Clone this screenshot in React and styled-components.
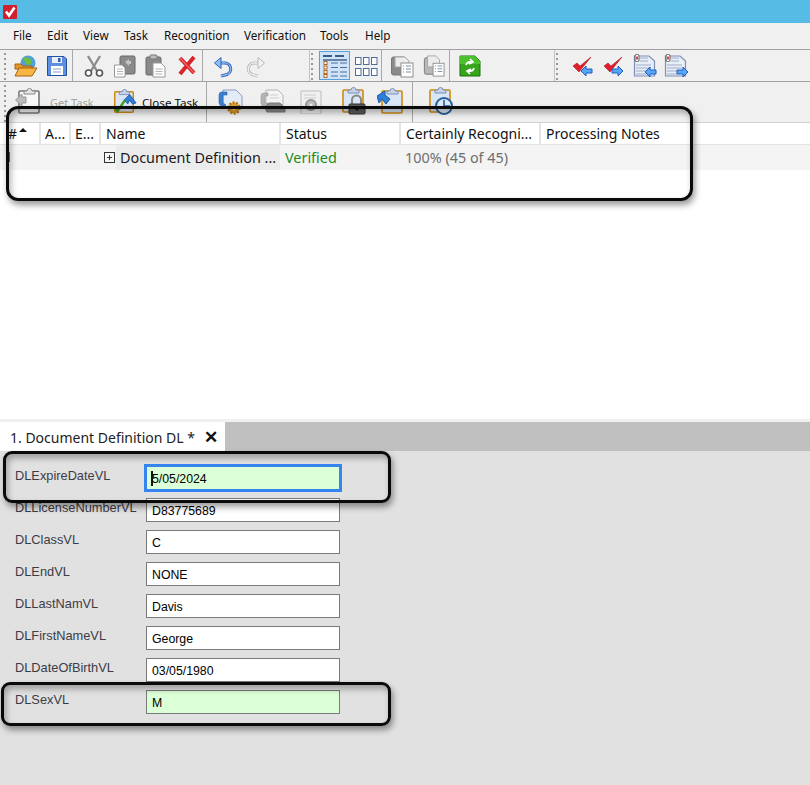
import React from "react";
import styled, { createGlobalStyle } from "styled-components";

const GlobalStyle = createGlobalStyle`
  html, body { margin: 0; padding: 0; background: #fff; }
  body { font-family: "Noto Sans", "Open Sans", sans-serif; }
`;

const Page = styled.div`
  position: relative;
  width: 810px;
  height: 785px;
  overflow: hidden;
  display: flex;
  flex-direction: column;
`;

const TitleBar = styled.div`
  height: 23px;
  background: #56bce6;
  display: flex;
  align-items: center;
  padding-left: 3px;
`;

const MenuBar = styled.div`
  height: 26px;
  box-sizing: border-box;
  padding: 0 0 2px 13px;
  background: #f0f0f0;
  display: flex;
  align-items: center;
  font-size: 11.7px;
  color: #111;
`;

const MenuItem = styled.span`
  width: ${(p) => p.$w}px;
`;

const Toolbar = styled.div`
  height: ${(p) => p.$h}px;
  box-sizing: content-box;
  background: #f0f0f0;
  border-top: 1px solid #a0a0a0;
  display: flex;
  align-items: center;
`;

const Grip = styled.div`
  width: 4px;
  height: 100%;
  margin-left: ${(p) => p.$ml || 3}px;
  margin-right: ${(p) => p.$mr || 3}px;
  border-left: ${(p) => (p.$line ? "1px solid #c4c4c4" : "none")};
  background: repeating-linear-gradient(to bottom, #9a9a9a 0 2px, transparent 2px 5px) no-repeat 1px 3px / 2px 100%;
`;

const Sep = styled.div`
  width: 1px;
  flex: none;
  align-self: stretch;
  background: #a8a8a8;
  margin-left: ${(p) => p.$ml || 0}px;
  margin-right: ${(p) => p.$mr || 0}px;
`;

const ToolButton = styled.div`
  width: ${(p) => p.$w || 31}px;
  flex: none;
  height: 29px;
  box-sizing: border-box;
  display: flex;
  align-items: center;
  justify-content: center;
  border: 1px solid ${(p) => (p.$active ? "#5a9fd8" : "transparent")};
  background: ${(p) => (p.$active ? "#cfe4f9" : "transparent")};
`;

const TextTool = styled.div`
  display: flex;
  align-items: center;
  flex: none;
  width: ${(p) => p.$w}px;
  font-size: ${(p) => (p.$muted ? 11 : 11.6)}px;
  color: ${(p) => (p.$muted ? "#a2a2a2" : "#111")};
  gap: ${(p) => p.$gap}px;
`;

const Table = styled.div`
  display: flex;
  flex-direction: column;
  flex: 1;
  background: #fff;
`;

const HeaderRow = styled.div`
  display: grid;
  grid-template-columns: 41px 30px 30px 180px 120px 140px 1fr;
  height: 23px;
  box-sizing: border-box;
  border-top: 1px solid #d2d2d2;
  border-bottom: 1px solid #e4e4e4;
  font-size: 14px;
  color: #111;
`;

const HeadCell = styled.div`
  display: flex;
  align-items: center;
  padding-left: ${(p) => p.$pad ?? 5}px;
  border-right: 2px solid #e4e4e4;
  white-space: nowrap;
  overflow: hidden;
  &:last-child { border-right: none; }
`;

const SortMark = styled.span`
  width: 0;
  height: 0;
  margin: 0 0 8px 2px;
  border-left: 4px solid transparent;
  border-right: 4px solid transparent;
  border-bottom: 4px solid #111;
`;

const DataRow = styled.div`
  display: grid;
  grid-template-columns: 100px 180px 120px 1fr;
  height: 25px;
  background: #f4f4f4;
  font-size: 14.4px;
`;

const RowLead = styled.div`
  position: relative;
`;

const RowMarker = styled.span`
  position: absolute;
  left: 8px;
  top: 7px;
  width: 2px;
  height: 10px;
  background: #2f6fc0;
`;

const NameCell = styled.div`
  display: flex;
  align-items: center;
  background: linear-gradient(to right, #f4f4f4 16px, #ececec 16px);
  white-space: nowrap;
  color: #1a1a1a;
  padding-left: 4px;
  gap: 5px;
`;

const Expander = styled.span`
  position: relative;
  width: 9px;
  height: 9px;
  border: 1px solid #333;
  flex: none;
  background:
    linear-gradient(#333, #333) center / 5px 1px no-repeat,
    linear-gradient(#333, #333) center / 1px 5px no-repeat;
`;

const StatusCell = styled.div`
  display: flex;
  align-items: center;
  padding-left: 5px;
  color: ${(p) => p.$color};
`;

const TabStrip = styled.div`
  height: 29px;
  border-top: 3px solid #f0f0f0;
  background: #c0c0c0;
  display: flex;
`;

const Tab = styled.div`
  width: 225px;
  box-sizing: border-box;
  padding: 1px 0 0 10px;
  background: #fff;
  display: flex;
  align-items: center;
  gap: 9px;
  font-size: 14px;
  color: #222;
`;

const TabClose = styled.span`
  font-family: "Liberation Sans", sans-serif;
  font-weight: bold;
  font-size: 17px;
  color: #111;
`;

const Form = styled.div`
  height: 334px;
  background: #e1e1e1;
  padding: 11px 0 0 15px;
  box-sizing: border-box;
  font-family: "Liberation Sans", Arial, sans-serif;
`;

const FormRow = styled.div`
  display: flex;
  align-items: center;
  height: 32px;
`;

const FieldLabel = styled.div`
  width: 131px;
  font-size: 12.8px;
  color: #3c3c46;
  margin-top: -6px;
`;

const Field = styled.div`
  position: relative;
  width: 194px;
  height: 24px;
  box-sizing: border-box;
  padding: 1px 0 0 5px;
  display: flex;
  align-items: center;
  font-size: 12.3px;
  color: #000;
  background: ${(p) => (p.$ok ? "#dbffd6" : "#fff")};
  border: 1px solid #7a7a7a;
  ${(p) => p.$focus && `
    outline: 2px solid #3585f0;
    outline-offset: 0;
    border-color: #3585f0;
  `}
`;

const Caret = styled.span`
  position: absolute;
  left: 4px;
  top: 4px;
  width: 2px;
  height: 15px;
  background: #111;
`;

const Callout = styled.div`
  position: absolute;
  box-sizing: border-box;
  left: ${(p) => p.$x}px;
  top: ${(p) => p.$y}px;
  width: ${(p) => p.$w}px;
  height: ${(p) => p.$h}px;
  border: 3px solid #0a0a0a;
  border-radius: ${(p) => p.$r}px;
  box-shadow: 2px 4px 6px rgba(0, 0, 0, 0.4), inset 2px 4px 6px rgba(0, 0, 0, 0.3);
  pointer-events: none;
`;

const AppMark = () => (
  <svg width="14" height="14" viewBox="0 0 14 14">
    <rect width="14" height="14" rx="1" fill="#d0202f" />
    <path d="M3 6.5 L6 10.5 L11.5 2.5" fill="none" stroke="#fff" strokeWidth="2.6" />
  </svg>
);

const Ico = ({ w = 24, h = 24, top = 0, children }) => (
  <svg width={w} height={h} viewBox={`0 ${top} ${w} ${h}`}>{children}</svg>
);

const OpenIcon = () => (
  <Ico>
    <circle cx="14" cy="9" r="7.5" fill="#4f9fd8" />
    <path d="M9 4 q4 -2 7 1 q3 3 0 6 q-4 0 -5 -3z" fill="#6fbf3f" />
    <path d="M1 10 h6 l2 2 h9 v3 h-17z" fill="#e0962c" stroke="#a8620e" />
    <path d="M1 22 L5 14 H23 L18 22z" fill="#f7b545" stroke="#a8620e" />
  </Ico>
);

const SaveIcon = () => (
  <Ico>
    <path d="M2.5 2.5 H19 L21.5 5 V21.5 H2.5z" fill="#5f8fe0" stroke="#23509f" />
    <rect x="7" y="3" width="10" height="6" fill="#e8eefa" />
    <rect x="13" y="4" width="2.5" height="4" fill="#2f5fb0" />
    <rect x="6" y="12" width="12" height="9" fill="#fff" />
    <path d="M8 15 h8 M8 18 h8" stroke="#8aa0c8" />
  </Ico>
);

const CutIcon = () => (
  <Ico>
    <path d="M6 2 L15 17 M18 2 L9 17" stroke="#8c8c8c" strokeWidth="2.4" />
    <circle cx="6.5" cy="19" r="3" fill="#fff" stroke="#555" strokeWidth="1.6" />
    <circle cx="17.5" cy="19" r="3" fill="#fff" stroke="#555" strokeWidth="1.6" />
  </Ico>
);

const CopyIcon = () => (
  <Ico>
    <rect x="7" y="2" width="15" height="18" rx="1.5" fill="#8a8a8a" stroke="#666" />
    <path d="M12 8 l4 -3 v2 h2 v3 h-2 v2z" fill="#c4c4c4" />
    <path d="M1.5 11 H9 L12 14 V23 H1.5z" fill="#fff" stroke="#9a9a9a" />
    <path d="M4 15 h6 M4 17.5 h6 M4 20 h6" stroke="#b4b4b4" />
  </Ico>
);

const PasteIcon = () => (
  <Ico>
    <rect x="2" y="3" width="15" height="18" rx="1.5" fill="#8a8a8a" stroke="#666" />
    <rect x="6" y="1" width="7" height="4" rx="1" fill="#bdbdbd" stroke="#777" />
    <path d="M9 9 H17 L21 13 V23 H9z" fill="#fff" stroke="#9a9a9a" />
    <path d="M11.5 15 h7 M11.5 17.5 h7 M11.5 20 h7" stroke="#b4b4b4" />
  </Ico>
);

const DeleteIcon = () => (
  <Ico>
    <path d="M5 4 L19 19 M19 3 L5 20" stroke="#d6242a" strokeWidth="4" />
    <path d="M5 4 L19 19" stroke="#f06a62" strokeWidth="1.2" />
  </Ico>
);

const ArrowCurve = ({ body, edge }) => (
  <>
    <path d="M7 9 H12 a6 6 0 0 1 3 11.5 L9 22" fill="none" stroke={edge} strokeWidth="3" />
    <path d="M7 9 H12 a6 6 0 0 1 3 11.5 L9 22" fill="none" stroke={body} strokeWidth="1.3" />
    <path d="M9 3.5 L2.5 9 L9 14.5z" fill={body} stroke={edge} />
  </>
);

const UndoIcon = () => (
  <Ico><ArrowCurve body="#8cc0f2" edge="#2f5fb8" /></Ico>
);

const RedoIcon = () => (
  <Ico>
    <g transform="translate(24 0) scale(-1 1)"><ArrowCurve body="#f4f4f4" edge="#b8b8b8" /></g>
  </Ico>
);

const ListIcon = () => (
  <Ico w={26} h={24}>
    <path d="M1 2 h9 M13 2 h9" stroke="#3c5a88" strokeWidth="2" />
    <path d="M1 6 h24" stroke="#3c5a88" strokeWidth="1.4" />
    {[10, 14.5, 19, 23].map((y) => (
      <g key={y}>
        <rect x="2" y={y - 2.5} width="3" height="3" fill="#fff" stroke="#b5651d" />
        <path d={`M9 ${y - 1} h7 M18 ${y - 1} h7`} stroke="#4e6c9c" />
      </g>
    ))}
  </Ico>
);

const GridIcon = () => (
  <Ico w={24} h={20}>
    {[1, 9, 17].map((x) =>
      [1, 12].map((y) => (
        <rect key={`${x}${y}`} x={x + 0.5} y={y + 0.5} width="5.5" height="7" fill="#fff" stroke="#4e6c9c" />
      ))
    )}
  </Ico>
);

const DocStackIcon = ({ muted }) => (
  <Ico>
    <path d="M1.5 5 q0 -2 2 -2 H14 v18 H3.5 q-2 0 -2 -2z" fill={muted ? "#b8b8b8" : "#8a8a8a"} stroke="#777" />
    <path d={muted ? "M5 1 H14 L18 5 V13 H5z" : "M5 3 H15 L19 7 V13 H5z"} fill="#ececec" stroke="#a4a4a4" />
    <rect x="11" y="9" width="12" height="14" fill="#fff" stroke="#8c8c8c" />
    <path d="M13 12 h1 M16 12 h5 M13 15 h1 M16 15 h5 M13 18 h1 M16 18 h5" stroke="#7a8aa0" />
  </Ico>
);

const RefreshIcon = () => (
  <Ico>
    <path d="M2 2 H17 L22 7 V22 H2z" fill="#36a51c" stroke="#1d6d0e" />
    <path d="M2 2 H17 L22 7 V10 H2z" fill="#4cc12e" />
    <path d="M8 11 q1 -4 6 -3 M12 5 l3 3 l-4 2 M16 14 q-1 4 -6 3 M12 20 l-3 -3 l4 -2" fill="none" stroke="#fff" strokeWidth="1.7" />
  </Ico>
);

const CheckArrowIcon = ({ dir }) => (
  <Ico>
    <path d="M2 12 L8 18 L20 3 L9 12 L6 9z" fill="#e0202c" stroke="#a81820" strokeWidth="0.6" />
    <path
      d={dir === "left" ? "M10 17 L15 12 V15 H21 V19 H15 V22z" : "M21 17 L16 12 V15 H10 V19 H16 V22z"}
      fill="#58a6f4"
      stroke="#1d5fc8"
    />
  </Ico>
);

const FormArrowIcon = ({ dir }) => (
  <Ico>
    <path d="M1.5 2 H16 L21.5 7 V22 H1.5z" fill="#e8eef8" stroke="#7e90b4" strokeWidth="1.2" />
    <rect x="2" y="0.5" width="4" height="7" rx="1.5" fill="#fff" stroke="#555" />
    <rect x="3.2" y="2.5" width="1.6" height="3" fill="#c02028" />
    <path d="M7 4 h8 M7 7 h8 M3 11 h15 M3 14 h15 M3 17 h10 M3 20 h10" stroke="#a0aec8" />
    <path
      d={dir === "left" ? "M12 18 L17 13 V16 H23 V20 H17 V23z" : "M24 18 L19 13 V16 H13 V20 H19 V23z"}
      fill="#58a6f4"
      stroke="#1d5fc8"
    />
  </Ico>
);

const ClipBase = ({ muted }) => (
  <>
    <rect x="4" y="5" width="20" height="22" rx="1" fill={muted ? "#f8f8f8" : "#d8e6f8"} stroke={muted ? "#777" : "#d08a10"} strokeWidth="1.6" />
    <path d="M9 5 h3 a2.5 2.5 0 0 1 5 0 h3 v3 H9z" fill={muted ? "#e4e4e4" : "#c4d4ec"} stroke={muted ? "#888" : "#8090b0"} />
  </>
);

const GetTaskIcon = () => (
  <Ico w={28} h={28} top={2}>
    <ClipBase muted />
    <path d="M0.5 14 L7 8 V11 H11 V17 H7 V20z" fill="#bcbcbc" stroke="#999" />
  </Ico>
);

const CloseTaskIcon = () => (
  <Ico w={28} h={28} top={2}>
    <ClipBase />
    <path d="M14 14 L20 8 L27 17 L23 18 L20 14 L18 18z" fill="#2f7fd8" stroke="#1d5aa8" />
    <path d="M3 21 L7 26 L15 14" fill="none" stroke="#3fa020" strokeWidth="2.6" />
  </Ico>
);

const DocGearIcon = () => (
  <Ico w={28} h={28}>
    <path d="M5 2 H18 L24 8 V20 H5z" fill="#e4ecf8" stroke="#8a9ac0" />
    <path d="M1 7 q0 -3 3 -3 h5 v3 h-4 v8 l3 2 l-2 2 q-5 -1 -5 -5z" fill="#3c80d0" stroke="#2a5fa8" strokeWidth="0.6" />
    <circle cx="16" cy="20" r="5.5" fill="#e0a030" stroke="#b87a14" strokeWidth="2.4" strokeDasharray="2 1.4" />
    <circle cx="16" cy="20" r="2" fill="#f6dda0" />
  </Ico>
);

const DocPrinterIcon = () => (
  <Ico w={28} h={28}>
    <path d="M7 2 H19 L24 7 V17 H7z" fill="#f4f4f4" stroke="#b4b4b4" />
    <path d="M11 7 h8 M11 10 h9" stroke="#cfcfcf" />
    <path d="M2 8 q0 -3 3 -3 h4 v3 h-3 v7 h3 v3 H5 q-3 0 -3 -3z" fill="#b4b4b4" stroke="#999" strokeWidth="0.6" />
    <path d="M6 20 L10 15 H21 L26 20 V24 H8z" fill="#8e8e8e" stroke="#7a7a7a" />
    <path d="M9 20 H25" stroke="#c4c4c4" />
  </Ico>
);

const DocSmallIcon = () => (
  <Ico>
    <rect x="2" y="1" width="20" height="23" rx="1" fill="#f0f0f0" stroke="#bbb" />
    <path d="M5 5 h12 M5 8 h12" stroke="#ccc" />
    <circle cx="12" cy="15" r="5" fill="#bdbdbd" stroke="#999" strokeWidth="2" />
    <circle cx="12" cy="15" r="1.5" fill="#eee" />
  </Ico>
);

const LockIcon = () => (
  <Ico w={28} h={30} top={2}>
    <ClipBase />
    <path d="M13 19 v-4 a4.5 4.5 0 0 1 9 0 v4" fill="none" stroke="#888" strokeWidth="2" />
    <rect x="10" y="19" width="16" height="10" rx="1" fill="#5c5c5c" stroke="#333" />
    <circle cx="18" cy="24" r="1.6" fill="#111" />
  </Ico>
);

const ClipArrowIcon = () => (
  <Ico w={26} h={28} top={2}>
    <g transform="translate(1 0)"><ClipBase /></g>
    <path d="M0 10 L8 5 V9 L13 13 L9 18 L5 13 L2 17z" fill="#2f7fd8" stroke="#1d5aa8" />
  </Ico>
);

const ClockIcon = () => (
  <Ico w={28} h={30} top={2}>
    <ClipBase />
    <circle cx="18" cy="21" r="8" fill="#dfeaf8" stroke="#26609c" strokeWidth="2" />
    <path d="M18 15 V21 H24" fill="none" stroke="#26609c" strokeWidth="1.6" />
  </Ico>
);

const menus = [
  ["File", 34],
  ["Edit", 36],
  ["View", 41],
  ["Task", 40],
  ["Recognition", 80],
  ["Verification", 76],
  ["Tools", 45],
  ["Help", 40],
];

const fields = [
  { label: "DLExpireDateVL", value: "5/05/2024", ok: true, focus: true },
  { label: "DLLicenseNumberVL", value: "D83775689" },
  { label: "DLClassVL", value: "C" },
  { label: "DLEndVL", value: "NONE" },
  { label: "DLLastNamVL", value: "Davis" },
  { label: "DLFirstNameVL", value: "George" },
  { label: "DLDateOfBirthVL", value: "03/05/1980" },
  { label: "DLSexVL", value: "M", ok: true },
];

export default function App() {
  return (
    <Page>
      <GlobalStyle />
      <TitleBar><AppMark /></TitleBar>
      <MenuBar>
        {menus.map(([name, w]) => (
          <MenuItem key={name} $w={w}>{name}</MenuItem>
        ))}
      </MenuBar>

      <Toolbar $h={31}>
        <Grip />
        <ToolButton><OpenIcon /></ToolButton>
        <ToolButton><SaveIcon /></ToolButton>
        <Sep $mr={5} />
        <ToolButton><CutIcon /></ToolButton>
        <ToolButton><CopyIcon /></ToolButton>
        <ToolButton><PasteIcon /></ToolButton>
        <ToolButton><DeleteIcon /></ToolButton>
        <Sep $mr={5} />
        <ToolButton><UndoIcon /></ToolButton>
        <ToolButton><RedoIcon /></ToolButton>
        <Grip $ml={39} $mr={5} $line />
        <ToolButton $active><ListIcon /></ToolButton>
        <ToolButton><GridIcon /></ToolButton>
        <Sep />
        <ToolButton $w={40}><DocStackIcon /></ToolButton>
        <ToolButton $w={24}><DocStackIcon muted /></ToolButton>
        <Sep $ml={3} />
        <ToolButton $w={40}><RefreshIcon /></ToolButton>
        <Grip $ml={64} $mr={8} $line />
        <ToolButton><CheckArrowIcon dir="left" /></ToolButton>
        <ToolButton><CheckArrowIcon dir="right" /></ToolButton>
        <ToolButton><FormArrowIcon dir="left" /></ToolButton>
        <ToolButton><FormArrowIcon dir="right" /></ToolButton>
      </Toolbar>

      <Toolbar $h={40}>
        <Grip />
        <TextTool $w={100} $gap={3} $muted>
          <ToolButton $w={37}><GetTaskIcon /></ToolButton>
          Get Task
        </TextTool>
        <TextTool $w={96} $gap={4}>
          <ToolButton $w={28}><CloseTaskIcon /></ToolButton>
          Close Task
        </TextTool>
        <Sep />
        <ToolButton $w={50}><DocGearIcon /></ToolButton>
        <ToolButton $w={32}><DocPrinterIcon /></ToolButton>
        <ToolButton $w={44}><DocSmallIcon /></ToolButton>
        <ToolButton $w={40}><LockIcon /></ToolButton>
        <ToolButton $w={34}><ClipArrowIcon /></ToolButton>
        <Sep $ml={5} />
        <ToolButton $w={54}><ClockIcon /></ToolButton>
      </Toolbar>

      <Table>
        <HeaderRow>
          <HeadCell $pad={8}>#<SortMark /></HeadCell>
          <HeadCell $pad={4}>A...</HeadCell>
          <HeadCell $pad={4}>E...</HeadCell>
          <HeadCell>Name</HeadCell>
          <HeadCell>Status</HeadCell>
          <HeadCell>Certainly Recogni...</HeadCell>
          <HeadCell>Processing Notes</HeadCell>
        </HeaderRow>
        <DataRow>
          <RowLead><RowMarker /></RowLead>
          <NameCell><Expander />Document Definition ...</NameCell>
          <StatusCell $color="#1d8a1d">Verified</StatusCell>
          <StatusCell $color="#6e6e6e">100% (45 of 45)</StatusCell>
        </DataRow>
      </Table>

      <TabStrip>
        <Tab>1. Document Definition DL *<TabClose>✕</TabClose></Tab>
      </TabStrip>
      <Form>
        {fields.map((f) => (
          <FormRow key={f.label}>
            <FieldLabel>{f.label}</FieldLabel>
            <Field $ok={f.ok} $focus={f.focus}>
              {f.focus && <Caret />}
              {f.value}
            </Field>
          </FormRow>
        ))}
      </Form>

      <Callout $x={6} $y={106} $w={687} $h={95} $r={12} />
      <Callout $x={3} $y={451} $w={388} $h={52} $r={9} />
      <Callout $x={1} $y={682} $w={390} $h={44} $r={9} />
    </Page>
  );
}
